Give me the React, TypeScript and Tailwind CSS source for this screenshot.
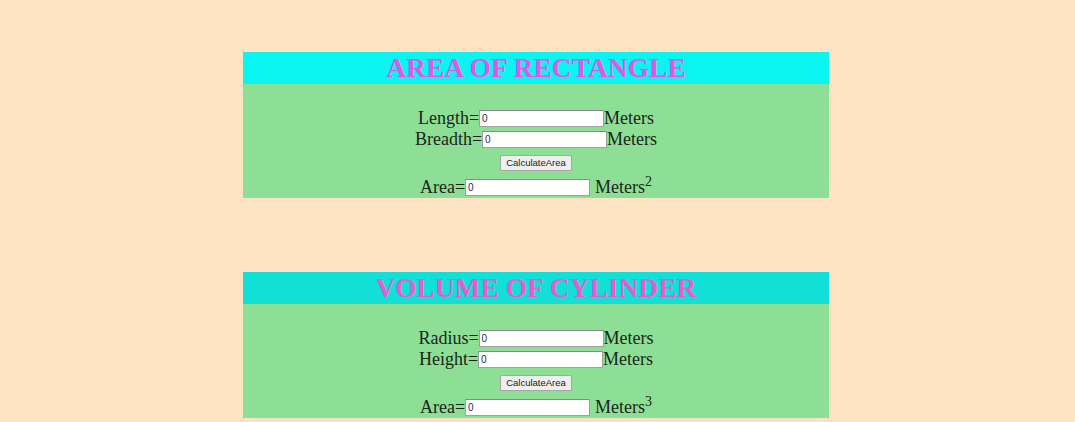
import React from "react";

function Field({ label, unitSup, gapBefore }: { label: string; unitSup?: string; gapBefore?: boolean }) {
  return (
    <div className="flex items-center justify-center h-[21px]">
      <span>{label}=</span>
      <input
        readOnly
        value="0"
        className="w-[125px] h-[17px] bg-white border border-[#a0a0a0] border-t-[#8a8a8a] px-[2px] text-[10px] text-[#1f2a5a] font-['Liberation_Sans',sans-serif] outline-none"
      />
      {gapBefore ? <span className="w-[5px]" /> : null}
      <span>
        Meters
        {unitSup ? <sup className="text-[14px]">{unitSup}</sup> : null}
      </span>
    </div>
  );
}

function Panel({
  title,
  headerBg,
  titleColor,
  labels,
  sup,
}: {
  title: string;
  headerBg: string;
  titleColor: string;
  labels: [string, string];
  sup: string;
}) {
  return (
    <div className="ml-[243px] w-[586px] bg-[#8cdf95] text-[#1b261b] text-[18px] leading-[21px] font-['Liberation_Serif',serif]">
      <div className={`h-[32px] flex items-center justify-center ${headerBg}`}>
        <h1 className={`text-[27.5px] font-bold leading-[32px] ${titleColor}`}>{title}</h1>
      </div>
      <div className="pt-[24px] flex flex-col">
        <Field label={labels[0]} />
        <Field label={labels[1]} />
        <div className="flex justify-center pt-[5px] pb-[6px]">
          <button className="h-[16px] px-[5px] bg-[#efefef] border border-[#a6a6a6] rounded-[2px] text-[9.5px] leading-[14px] text-[#222] font-['Liberation_Sans',sans-serif]">
            CalculateArea
          </button>
        </div>
        <Field label="Area" unitSup={sup} gapBefore />
      </div>
    </div>
  );
}

export default function App() {
  return (
    <div className="min-h-[422px] w-full bg-[#fde3c2] pt-[52px] pb-[10px]">
      <Panel
        title="AREA OF RECTANGLE"
        headerBg="bg-[#0af4f1]"
        titleColor="text-[#e655e6]"
        labels={["Length", "Breadth"]}
        sup="2"
      />
      <div className="h-[74px]" />
      <Panel
        title="VOLUME OF CYLINDER"
        headerBg="bg-[#12e0d7]"
        titleColor="text-[#e85cd2]"
        labels={["Radius", "Height"]}
        sup="3"
      />
    </div>
  );
}
